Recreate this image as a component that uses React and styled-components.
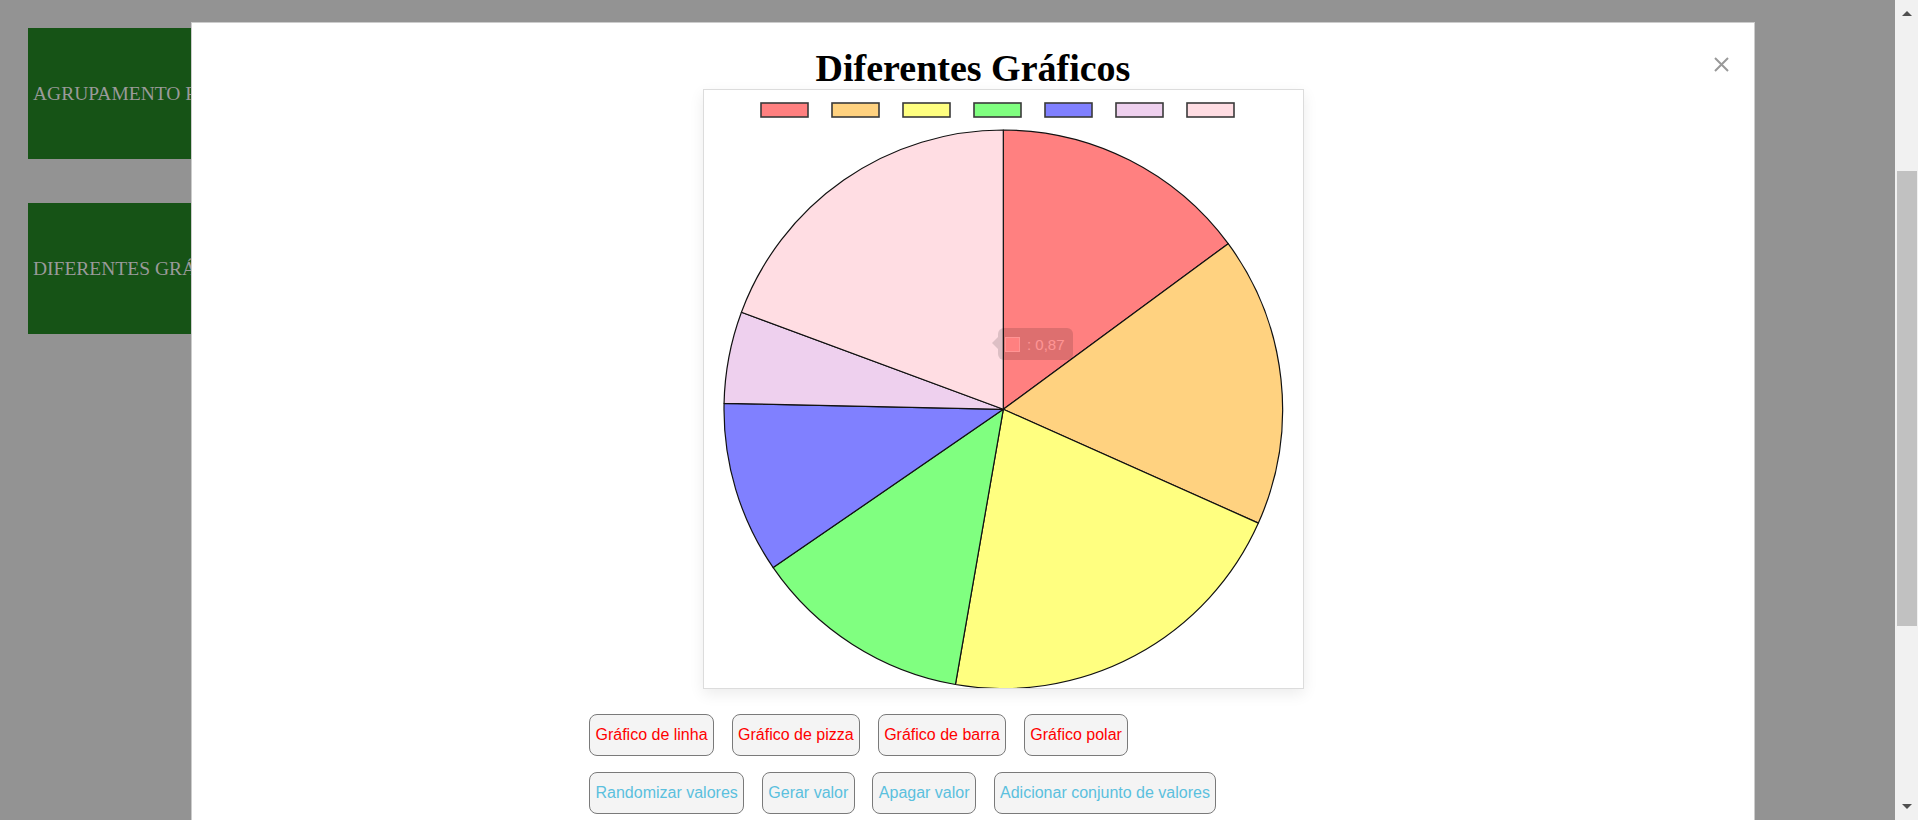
import React from 'react';
import styled, {createGlobalStyle} from 'styled-components';

const RED = "#ff0000"
const INFO = "#5bc0de"

const GlobalStyle = createGlobalStyle`
    html, body {
        margin: 0;
        padding: 0;
        overflow: hidden;
        background: #939393;
    }
`

const Screen = styled.div`
    display: flex;
    height: 820px;
    width: 100%;
`

const Page = styled.div`
    flex: 1;
    position: relative;
    overflow: hidden;
    padding: 28px;
`

const MenuBox = styled.div`
    display: flex;
    align-items: center;
    width: 400px;
    height: 131px;
    margin-bottom: 44px;
    padding-left: 5px;
    box-sizing: border-box;
    background: #165316;
    color: #9a9a9a;
    font-family: "Liberation Serif", "Times New Roman", serif;
    font-size: 19.5px;
    white-space: nowrap;
`

const Modal = styled.div`
    position: absolute;
    top: 22px;
    left: 191px;
    width: 1564px;
    height: 1000px;
    box-sizing: border-box;
    background: #fff;
    border: 1px solid rgba(0, 0, 0, 0.2);
    padding-top: 24px;
`

const CloseButton = styled.button`
    position: absolute;
    top: 34px;
    right: 25px;
    width: 15px;
    height: 15px;
    padding: 0;
    border: none;
    background: none;
    display: flex;
`

const Title = styled.h1`
    margin: 0;
    text-align: center;
    font-family: "Liberation Serif", "Times New Roman", serif;
    font-weight: bold;
    font-size: 38px;
    line-height: 42px;
    color: #000;
`

const Content = styled.div`
    margin-left: 397px;
`

const ChartCard = styled.div`
    width: 601px;
    height: 600px;
    margin-left: 114px;
    box-sizing: border-box;
    border: 1px solid #dcdcdc;
    box-shadow: 0 5px 14px rgba(0, 0, 0, 0.08);
    background: #fff;
    svg {
        display: block;
    }
`

const ButtonRow = styled.div`
    display: flex;
    gap: 17.5px;
    margin-top: ${props => props.first ? '25px' : '16px'};
`

const ActionButton = styled.button`
    font-family: "Liberation Sans", Arial, sans-serif;
    font-size: 16px;
    line-height: 18px;
    padding: 11px 5.5px;
    border: 1px solid #7a7a7a;
    border-radius: 8px;
    background: #f4f4f4;
    color: ${props => props.info ? INFO : RED};
    white-space: nowrap;
`

const Scrollbar = styled.div`
    width: 23px;
    background: #f1f1f1;
    display: flex;
    flex-direction: column;
`

const ArrowButton = styled.div`
    height: 27px;
    display: flex;
    align-items: center;
    justify-content: center;
    svg {
        display: block;
        margin-left: 1px;
    }
`

const Track = styled.div`
    flex: 1;
`

const Thumb = styled.div`
    margin: 144px 1px 0 2px;
    height: 455px;
    background: #c1c1c1;
`

const slices = [
    {value: 0.87, color: "#ff8080"},
    {value: 0.98, color: "#ffd280"},
    {value: 1.23, color: "#ffff80"},
    {value: 0.74, color: "#80ff80"},
    {value: 0.58, color: "#8080ff"},
    {value: 0.31, color: "#eed0ee"},
    {value: 1.13, color: "#ffdde3"},
]

const CX = 299.3
const CY = 319.3
const R = 279.3

function slicePaths() {
    const total = slices.reduce((s, d) => s + d.value, 0)
    let a = -Math.PI / 2
    return slices.map(d => {
        const b = a + (d.value / total) * Math.PI * 2
        const x1 = CX + R * Math.cos(a), y1 = CY + R * Math.sin(a)
        const x2 = CX + R * Math.cos(b), y2 = CY + R * Math.sin(b)
        const large = b - a > Math.PI ? 1 : 0
        const path = `M${CX},${CY} L${x1},${y1} A${R},${R} 0 ${large} 1 ${x2},${y2} Z`
        a = b
        return {path, color: d.color}
    })
}

function PieChart() {
    return (
        <svg width="599" height="598" viewBox="0 0 599 598">
            {slices.map((s, i) => (
                <rect key={i} x={57 + i * 71} y="13" width="47" height="14"
                      fill={s.color} stroke="#3a3a3a" strokeWidth="1.6"/>
            ))}
            {slicePaths().map((p, i) => (
                <path key={i} d={p.path} fill={p.color} stroke="#111" strokeWidth="1.2" strokeLinejoin="round"/>
            ))}
            {/* fading tooltip */}
            <g opacity="0.16">
                <path d="M288,253 L294,247 L294,259 Z" fill="#000" opacity="0.8"/>
                <rect x="294" y="238" width="75" height="32" rx="6" fill="#000" opacity="0.8"/>
                <rect x="301.5" y="247.5" width="14" height="14" fill="#ff8080" stroke="#fff" strokeWidth="1"/>
                <text x="323" y="260" fill="#fff" fontSize="15" fontFamily="Liberation Sans, Arial, sans-serif">: 0,87</text>
            </g>
        </svg>
    )
}

export default function App() {
    return (
        <Screen>
            <GlobalStyle/>
            <Page>
                <MenuBox>AGRUPAMENTO POR CATEGORIA</MenuBox>
                <MenuBox>DIFERENTES GRÁFICOS</MenuBox>
                <Modal>
                    <CloseButton aria-label="Fechar">
                        <svg width="15" height="15" viewBox="0 0 15 15">
                            <path d="M1 1 L14 14 M14 1 L1 14" stroke="#999" strokeWidth="2"/>
                        </svg>
                    </CloseButton>
                    <Title>Diferentes Gráficos</Title>
                    <Content>
                        <ChartCard>
                            <PieChart/>
                        </ChartCard>
                        <ButtonRow first>
                            <ActionButton>Gráfico de linha</ActionButton>
                            <ActionButton>Gráfico de pizza</ActionButton>
                            <ActionButton>Gráfico de barra</ActionButton>
                            <ActionButton>Gráfico polar</ActionButton>
                        </ButtonRow>
                        <ButtonRow>
                            <ActionButton info>Randomizar valores</ActionButton>
                            <ActionButton info>Gerar valor</ActionButton>
                            <ActionButton info>Apagar valor</ActionButton>
                            <ActionButton info>Adicionar conjunto de valores</ActionButton>
                        </ButtonRow>
                    </Content>
                </Modal>
            </Page>
            <Scrollbar>
                <ArrowButton>
                    <svg width="10" height="5" viewBox="0 0 10 5"><path d="M0 5 L5 0 L10 5 Z" fill="#505050"/></svg>
                </ArrowButton>
                <Track>
                    <Thumb/>
                </Track>
                <ArrowButton>
                    <svg width="10" height="5" viewBox="0 0 10 5"><path d="M0 0 L5 5 L10 0 Z" fill="#505050"/></svg>
                </ArrowButton>
            </Scrollbar>
        </Screen>
    )
}
